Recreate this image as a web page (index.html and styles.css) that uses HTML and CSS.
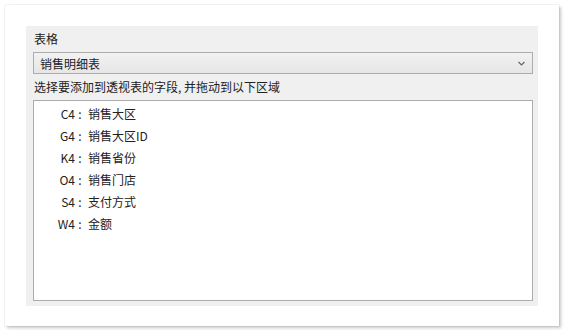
FILE: index.html
```html
<!DOCTYPE html>
<html lang="zh-CN">

<head>
    <meta charset="UTF-8">
    <title>数据透视表字段</title>
    <link rel="stylesheet" href="styles.css">
</head>

<body>
    <div class="card">
        <div class="panel">
            <div class="label">表格</div>
            <div class="select">
                <span>销售明细表</span>
                <svg class="chevron" width="7" height="5" viewBox="0 0 7 5">
                    <path d="M0.5 1 L3.5 4 L6.5 1" fill="none" stroke="#666" stroke-width="1.2" />
                </svg>
            </div>
            <div class="label">选择要添加到透视表的字段, 并拖动到以下区域</div>
            <div class="field-list">
                <div class="field"><span class="cell">C4</span><span class="colon">:</span><span>销售大区</span></div>
                <div class="field"><span class="cell">G4</span><span class="colon">:</span><span>销售大区ID</span></div>
                <div class="field"><span class="cell">K4</span><span class="colon">:</span><span>销售省份</span></div>
                <div class="field"><span class="cell">O4</span><span class="colon">:</span><span>销售门店</span></div>
                <div class="field"><span class="cell">S4</span><span class="colon">:</span><span>支付方式</span></div>
                <div class="field"><span class="cell">W4</span><span class="colon">:</span><span>金额</span></div>
            </div>
        </div>
    </div>
</body>

</html>
```

FILE: styles.css
```css
/* 基础 */
html,
body {
    margin: 0;
    background: #ffffff;
}

body {
    padding: 5px;
    font-family: "Noto Sans CJK SC", "Noto Sans", sans-serif;
    font-size: 12px;
    color: #222222;
}

/* 外层卡片 */
.card {
    width: 554px;
    height: 321px;
    box-sizing: border-box;
    padding: 21px 21px 20px 21px;
    background: #ffffff;
    box-shadow: 0 0 1px rgba(0, 0, 0, 0.25), 2px 2px 3px rgba(0, 0, 0, 0.22);
}

/* 灰色面板 */
.panel {
    height: 280px;
    box-sizing: border-box;
    padding: 0 5px 5px 7px;
    background: #f0f0f0;
}

.label {
    height: 26px;
    line-height: 26px;
    padding-left: 1px;
}

/* 下拉框 */
.select {
    height: 22px;
    box-sizing: border-box;
    border: 1px solid #acacac;
    background: linear-gradient(#f2f2f2, #e6e6e6);
    display: flex;
    align-items: center;
    justify-content: space-between;
    padding: 0 7px 0 6px;
}

/* 字段列表 */
.field-list {
    height: 201px;
    box-sizing: border-box;
    border: 1px solid #acacac;
    background: #ffffff;
    padding-top: 2px;
}

.field {
    display: flex;
    height: 22px;
    line-height: 22px;
}

.cell {
    width: 41px;
    text-align: right;
}

.colon {
    width: 10px;
    margin-right: 3px;
    text-align: center;
}
```
